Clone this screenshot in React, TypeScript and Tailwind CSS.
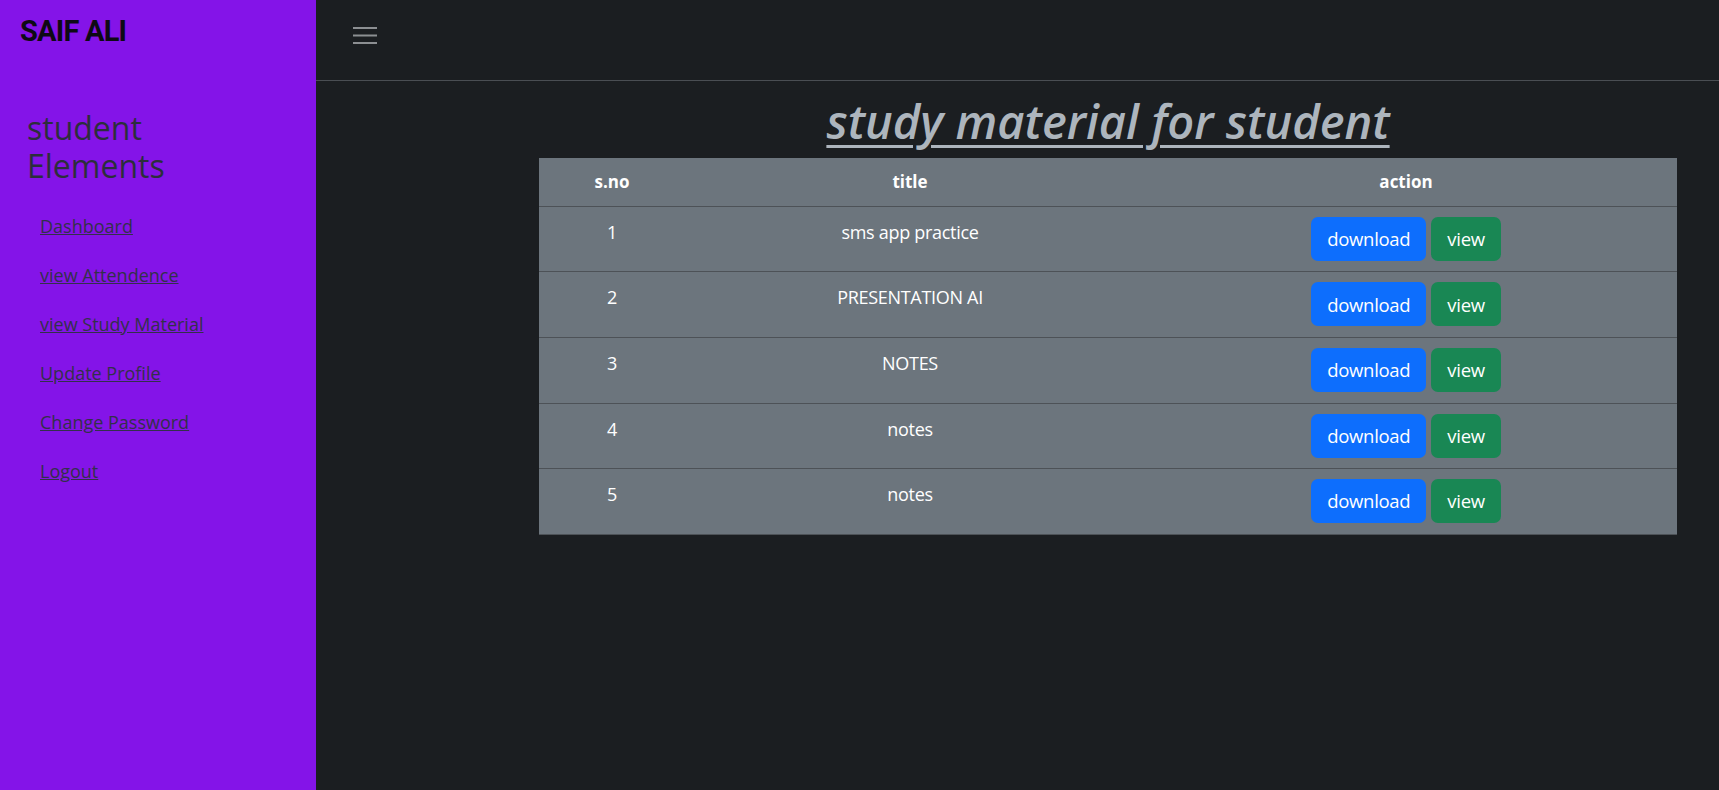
import React from "react";

const rows = [
  { n: 1, title: "sms app practice" },
  { n: 2, title: "PRESENTATION AI" },
  { n: 3, title: "NOTES" },
  { n: 4, title: "notes" },
  { n: 5, title: "notes" },
];

const links = [
  "Dashboard",
  "view Attendence",
  "view Study Material",
  "Update Profile",
  "Change Password",
  "Logout",
];

export default function App() {
  return (
    <div className="flex min-h-[790px] w-full font-['Open_Sans',sans-serif]">
      <aside className="w-[316px] shrink-0 bg-[#8414e8] flex flex-col">
        <div className="pl-[20px] pt-[14px] font-['Roboto',sans-serif] font-bold text-[29px] leading-[1.2] tracking-[-0.8px] text-[#0e0a14]">
          SAIF ALI
        </div>
        <h2 className="pl-[27px] mt-[60px] text-[32px] leading-[1.2] font-medium text-[#2c2e3c]">
          student
          <br />
          Elements
        </h2>
        <ul className="pl-[40px] mt-[28px] flex flex-col gap-[24px]">
          {links.map((l) => (
            <li key={l} className="text-[18px] leading-[25px]">
              <a href="#" className="underline text-[#33304a]">
                {l}
              </a>
            </li>
          ))}
        </ul>
      </aside>
      <main className="flex-1 bg-[#1b1e21] flex flex-col">
        <header className="h-[81px] shrink-0 border-b border-[#4a4e53] pl-[37px] pt-[27px]">
          <svg width="24" height="18" viewBox="0 0 24 18" className="block">
            <rect x="0" y="0" width="24" height="2" fill="#8c8f92" />
            <rect x="0" y="7.5" width="24" height="2" fill="#8c8f92" />
            <rect x="0" y="15" width="24" height="2" fill="#8c8f92" />
          </svg>
        </header>
        <div className="pl-[223px] pr-[42px]">
          <h1 className="mt-[12px] mb-[9px] text-center text-[47px] leading-[1.2] italic font-semibold underline decoration-[3px] underline-offset-[6px] text-[#adb5bd]">
            study material for student
          </h1>
          <table className="w-full bg-[#6c757d] text-white text-[18px] border-collapse">
            <thead>
              <tr className="h-[48px] border-b border-[#4d5257]">
                <th className="w-[146px] text-[17px] font-bold text-center">s.no</th>
                <th className="w-[450px] text-[17px] font-bold text-center">title</th>
                <th className="text-[17px] font-bold text-center">action</th>
              </tr>
            </thead>
            <tbody>
              {rows.map((r) => (
                <tr key={r.n} className="border-b border-[#4d5257]">
                  <td className="align-top text-center pt-[12px] h-[65.6px] tracking-[-0.3px]">{r.n}</td>
                  <td className="align-top text-center pt-[12px] tracking-[-0.3px]">{r.title}</td>
                  <td className="align-top text-center pt-[10px] pb-[10px]">
                    <div className="flex justify-center gap-[5px]">
                      <button className="h-[44px] px-[16px] rounded-[7px] bg-[#0d6efd] text-white text-[18.5px] tracking-[-0.3px]">
                        download
                      </button>
                      <button className="h-[44px] px-[16px] rounded-[7px] bg-[#198754] text-white text-[18.5px] tracking-[-0.3px]">
                        view
                      </button>
                    </div>
                  </td>
                </tr>
              ))}
            </tbody>
          </table>
        </div>
      </main>
    </div>
  );
}
